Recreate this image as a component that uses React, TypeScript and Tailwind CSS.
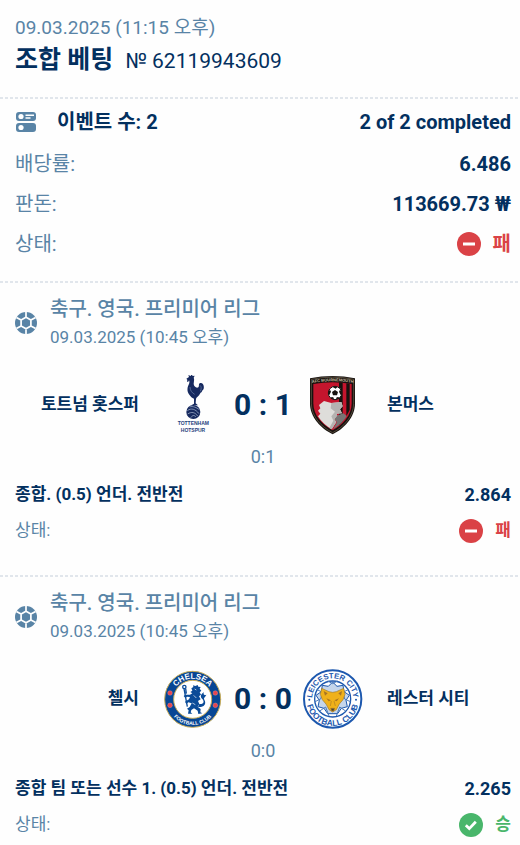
import type { ReactNode } from "react"

type Resultado = "win" | "loss"

interface Team {
    name: string
    logo: ReactNode
}

interface BetEvent {
    id: number
    league: string
    date: string
    home: Team
    away: Team
    score: string
    periods: string
    market: string
    odds: string
    status: Resultado
}

function EventsIcon() {
    return (
        <svg viewBox="-1 -1 22 22" className="size-[22px]" aria-hidden="true">
            <rect width="20" height="9" rx="3" fill="#5984a6" />
            <rect y="11" width="20" height="9" rx="3" fill="#5984a6" />
            <circle cx="5" cy="4.5" r="2.6" fill="#fff" />
            <circle cx="5" cy="15.5" r="2.6" fill="#fff" />
            <path d="M9.5 3.2h8.5M9.5 6h5" stroke="#fff" strokeWidth="1.4" />
        </svg>
    )
}

function BallIcon() {
    return (
        <svg viewBox="0 0 22 22" className="size-[22px]" aria-hidden="true">
            <circle cx="11" cy="11" r="11" fill="#5984a6" />
            <path
                d="M11 5.3L15.9 8.1V13.9L11 16.7L6.1 13.9V8.1ZM11 0V5.3M11 16.7V22M15.9 8.1L20.6 5.4M15.9 13.9L20.6 16.6M6.1 8.1L1.4 5.4M6.1 13.9L1.4 16.6"
                fill="none"
                stroke="#fff"
                strokeWidth="1.7"
            />
        </svg>
    )
}

function StatusIcon({ status }: { status: Resultado }) {
    return (
        <svg viewBox="0 0 24 24" className="size-6" aria-hidden="true">
            <circle cx="12" cy="12" r="12" fill={status === "win" ? "#49b66b" : "#da4246"} />
            {status === "win" ? (
                <path d="M6.8 12.2L10.3 15.6L16.8 8.8" fill="none" stroke="#fff" strokeWidth="2.8" />
            ) : (
                <rect x="6" y="10.5" width="12" height="3" fill="#fff" />
            )}
        </svg>
    )
}

function TottenhamLogo() {
    return (
        <svg viewBox="9 27 180 180" className="size-[60px]" role="img" aria-label="Tottenham">
            <g fill="#16295f">
                <path d="M79 38L87 33L85 27L92 30L95 25L98 30L104 29L101 35C104 41 101 48 101 54C102 62 109 67 115 64C119 60 114 52 121 51C129 50 133 58 131 68C130 72 127 71 126 76C125 80 122 79 120 83C117 89 110 93 108 98L107 112L114 118H94L102 113L102 98C96 96 92 91 88 86C82 79 81 69 84 61C87 54 90 49 87 43C85 47 84 50 81 46C82 42 83 41 79 38Z" />
                <circle cx="100" cy="138" r="21" />
            </g>
            <path d="M120 58C124 61 125 68 121 76M90 63C90 73 96 81 104 85" fill="none" stroke="#6f84ac" strokeWidth="2" />
            <path d="M82 134C94 125 106 129 117 143M83 144C95 136 105 139 113 150M89 123C98 119 110 125 118 131M92 155C99 146 104 147 107 153" fill="none" stroke="#b4c2da" strokeWidth="2" />
            <g fill="#27437d" fontSize="15" fontWeight="700" textAnchor="middle" fontFamily="Liberation Sans, sans-serif">
                <text x="100" y="177">TOTTENHAM</text>
                <text x="99" y="197">HOTSPUR</text>
            </g>
        </svg>
    )
}

function BournemouthLogo() {
    return (
        <svg viewBox="9 27 180 180" className="size-[60px]" role="img" aria-label="AFC Bournemouth">
            <path d="M30 37Q98 23 165 37V112C165 155 133 187 98 205C62 187 30 155 30 112Z" fill="#17120f" />
            <path d="M34 40Q98 27 161 40V112C161 152 131 183 98 200C64 183 34 152 34 112Z" fill="none" stroke="#8c7e62" strokeWidth="1.5" />
            <path d="M40 54Q98 44 155 54V112C155 148 128 177 98 193C67 177 40 148 40 112Z" fill="#c5152d" />
            <path d="M117 49L128 50V166L117 178ZM139 52L149 53V132L139 151Z" fill="#17120f" />
            <path d="M72 105L94 111L124 108L128 121L120 130L126 142L109 143L113 151L103 160L109 168L95 190C80 181 64 168 54 151L61 143L54 134L61 127L57 117Z" fill="#deddda" />
            <path d="M94 111L124 108L128 121L120 130L126 142L109 143L113 151L103 160L109 168L95 190L88 186L100 164L94 151L105 137L92 127Z" fill="#b4b3b1" />
            <path d="M113 148L130 142L140 150C128 170 112 182 99 190L111 169L104 160Z" fill="#777575" />
            <circle cx="105" cy="81" r="20" fill="#fff" stroke="#17120f" strokeWidth="3" />
            <path d="M105 72L114 78L111 88H99L96 78ZM97 62L113 62L107 68ZM86 76L90 71L93 77L88 87L85 84ZM124 76L120 71L117 77L122 87L125 84ZM93 93L100 94L102 100L95 98ZM117 93L110 94L108 100L115 98Z" fill="#17120f" />
            <path id="afcb-top" d="M36 51Q98 40 160 51" fill="none" />
            <text fill="#c8bda0" fontSize="12" fontWeight="700" textAnchor="middle" fontFamily="Liberation Sans, sans-serif">
                <textPath href="#afcb-top" startOffset="50%">AFC BOURNEMOUTH</textPath>
            </text>
        </svg>
    )
}

function ChelseaLogo() {
    return (
        <svg viewBox="24 21 180 180" className="size-[60px]" role="img" aria-label="Chelsea">
            <circle cx="113" cy="112" r="84" fill="#074694" stroke="#c9ad58" strokeWidth="3" />
            <circle cx="113" cy="112" r="57" fill="#fff" stroke="#c9ad58" strokeWidth="3" />
            <g fill="#e6454f" stroke="#f0a6a4" strokeWidth="1">
                <circle cx="45" cy="93" r="7" />
                <circle cx="181" cy="93" r="7" />
                <circle cx="45" cy="130" r="7" />
                <circle cx="181" cy="130" r="7" />
            </g>
            <path d="M109 79L115 75L114 70L121 72L128 69L130 74L137 75L134 80L139 86L134 91L138 98L132 103L137 112L129 117L133 126L128 134L137 141L136 151L142 154L130 156L128 146L117 139L109 144L107 151L112 155L99 155L101 145L96 140L104 135L110 124L100 121L94 126L90 119L102 112L105 105L96 104L91 108L86 102L91 98L105 98L112 94L106 90L112 86Z" fill="#0b4b98" />
            <path d="M87 80L97 134M94 95L92 80" fill="none" stroke="#0b4b98" strokeWidth="4" />
            <circle cx="88" cy="75" r="5" fill="#fff" stroke="#0b4b98" strokeWidth="4" />
            <path d="M133 126C147 128 149 116 141 110C134 104 139 94 147 91C143 97 149 102 154 98C151 106 145 106 148 113C156 127 145 137 129 135" fill="#0b4b98" />
            <path d="M116 100L124 108M112 123L121 128M119 81L124 84" stroke="#fff" strokeWidth="2" />
            <path id="cfc-top" d="M51 112A62 62 0 0 1 175 112" fill="none" />
            <path id="cfc-bottom" d="M36 112A77 77 0 0 0 190 112" fill="none" />
            <g fill="#fff" fontWeight="700" textAnchor="middle" fontFamily="Liberation Sans, sans-serif">
                <text fontSize="24">
                    <textPath href="#cfc-top" startOffset="50%">CHELSEA</textPath>
                </text>
                <text fontSize="15">
                    <textPath href="#cfc-bottom" startOffset="50%">FOOTBALL CLUB</textPath>
                </text>
            </g>
        </svg>
    )
}

function LeicesterLogo() {
    return (
        <svg viewBox="24 21 180 180" className="size-[60px]" role="img" aria-label="Leicester City">
            <circle cx="113" cy="111" r="86" fill="#fff" stroke="#1d58ae" strokeWidth="6" />
            <circle cx="113" cy="111" r="54" fill="#fff" stroke="#1d58ae" strokeWidth="4" />
            <path d="M113 60L126 73L144 70L147 89L163 100L153 115L157 134L139 139L128 155H98L87 139L69 134L73 115L63 100L79 89L82 70L100 73Z" fill="#c5d6eb" stroke="#1d58ae" strokeWidth="3" />
            <path d="M98 57L113 65L128 57M65 82L82 91L77 111L60 119M161 82L144 91L149 111L166 119M74 147L92 135L102 162M152 147L134 135L124 162" fill="none" stroke="#4b7bb9" strokeWidth="3" />
            <path d="M80 79L102 89L113 91L124 89L146 79L150 97L144 113L133 126L124 143L113 150L102 143L93 126L82 113L76 97Z" fill="#efb11a" stroke="#9c7831" strokeWidth="2" />
            <path d="M86 87L98 94L90 101ZM141 87L130 94L138 101ZM94 109L108 115L101 118ZM132 109L118 115L125 118Z" fill="#a87522" />
            <path d="M107 139H119L116 147H110ZM109 117L106 132M117 117L121 132" fill="#46413b" stroke="#ad7d23" strokeWidth="2" />
            <path id="lcfc-top" d="M51 111A62 62 0 0 1 175 111" fill="none" />
            <path id="lcfc-bottom" d="M36 101A78 78 0 1 0 190 101" fill="none" />
            <g fill="#1d58ae" fontWeight="700" textAnchor="middle" fontFamily="Liberation Sans, sans-serif">
                <text fontSize="23">
                    <textPath href="#lcfc-top" startOffset="50%">LEICESTER CITY</textPath>
                </text>
                <text fontSize="25">
                    <textPath href="#lcfc-bottom" startOffset="50%">FOOTBALL CLUB</textPath>
                </text>
            </g>
            <circle cx="43" cy="113" r="3" fill="#1d58ae" />
            <circle cx="183" cy="113" r="3" fill="#1d58ae" />
        </svg>
    )
}

const events: BetEvent[] = [
    {
        id: 1,
        league: "축구. 영국. 프리미어 리그",
        date: "09.03.2025 (10:45 오후)",
        home: { name: "토트넘 홋스퍼", logo: <TottenhamLogo /> },
        away: { name: "본머스", logo: <BournemouthLogo /> },
        score: "0 : 1",
        periods: "0:1",
        market: "종합. (0.5) 언더. 전반전",
        odds: "2.864",
        status: "loss",
    },
    {
        id: 2,
        league: "축구. 영국. 프리미어 리그",
        date: "09.03.2025 (10:45 오후)",
        home: { name: "첼시", logo: <ChelseaLogo /> },
        away: { name: "레스터 시티", logo: <LeicesterLogo /> },
        score: "0 : 0",
        periods: "0:0",
        market: "종합 팀 또는 선수 1. (0.5) 언더. 전반전",
        odds: "2.265",
        status: "win",
    },
]

function Divider() {
    return <div className="h-0.5 bg-[repeating-linear-gradient(90deg,#e1e6ec_0_3px,transparent_3px_5px)]" />
}

function Status({ status }: { status: Resultado }) {
    return (
        <span className={status === "win" ? "flex items-center gap-3 font-bold text-[#49b66b]" : "flex items-center gap-3 font-bold text-[#da4246]"}>
            <StatusIcon status={status} />
            {status === "win" ? "승" : "패"}
        </span>
    )
}

function SummaryRow({ label, children }: { label: string; children: ReactNode }) {
    return (
        <div className="flex h-10 items-center justify-between">
            <dt>{label}</dt>
            <dd className="font-bold text-[#03305f]">{children}</dd>
        </div>
    )
}

function EventCard({ event }: { event: BetEvent }) {
    return (
        <li>
            <Divider />
            <div className="pt-3 pr-[7px] pb-[26px] pl-[15px]">
                <div className="flex items-center gap-[13px]">
                    <BallIcon />
                    <div>
                        <h2 className="text-xl leading-7 font-medium">{event.league}</h2>
                        <p className="text-[17px] leading-7">{event.date}</p>
                    </div>
                </div>
                <div className="mt-6 grid grid-cols-[1fr_60px_80px_60px_1fr] items-center text-[17px] font-bold text-[#03305f]">
                    <span className="pr-6 text-right">{event.home.name}</span>
                    {event.home.logo}
                    <span className="text-center text-[30px] leading-[60px]">{event.score}</span>
                    {event.away.logo}
                    <span className="pl-6">{event.away.name}</span>
                </div>
                <p className="mt-1.5 text-center text-lg leading-8">{event.periods}</p>
                <div className="mt-1 flex h-9 items-center justify-between font-bold text-[#03305f]">
                    <span className="text-[17px]">{event.market}</span>
                    <span className="text-lg">{event.odds}</span>
                </div>
                <div className="flex h-9 items-center justify-between text-[17px]">
                    <span>상태:</span>
                    <Status status={event.status} />
                </div>
            </div>
        </li>
    )
}

export default function App() {
    return (
        <main className="min-h-screen bg-[#fefefe] pr-0.5 font-[Roboto,'Noto_Sans_CJK_KR',sans-serif] text-[#5984a6]">
            <header className="pt-3 pr-[7px] pb-5 pl-[15px]">
                <p className="text-[19px] leading-8">09.03.2025 (11:15 오후)</p>
                <div className="flex items-baseline gap-3 leading-8 text-[#03305f]">
                    <h1 className="text-[25px] leading-8 font-bold">조합 베팅</h1>
                    <span className="text-[21px]">№ 62119943609</span>
                </div>
            </header>
            <Divider />
            <dl className="pt-[3px] pr-[7px] pb-[17px] pl-[15px] text-xl">
                <div className="mb-0.5 flex h-10 items-center justify-between font-bold text-[#03305f]">
                    <dt className="flex items-center gap-5">
                        <EventsIcon />
                        이벤트 수: 2
                    </dt>
                    <dd>2 of 2 completed</dd>
                </div>
                <SummaryRow label="배당률:">6.486</SummaryRow>
                <SummaryRow label="판돈:">113669.73 ₩</SummaryRow>
                <SummaryRow label="상태:">
                    <Status status="loss" />
                </SummaryRow>
            </dl>
            <ul>
                {events.map((event) => (
                    <EventCard key={event.id} event={event} />
                ))}
            </ul>
        </main>
    )
}
